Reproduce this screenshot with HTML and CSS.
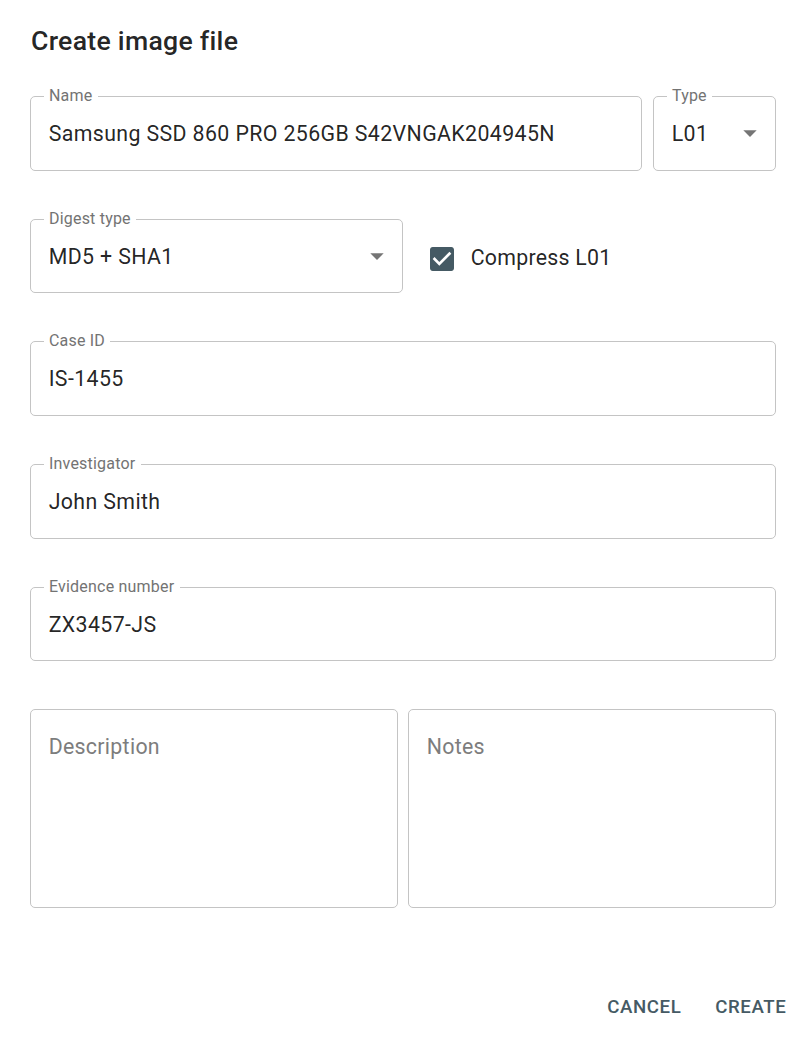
FILE: index.html
```html
<!DOCTYPE html>
<html lang="en">
<head>
<meta charset="utf-8">
<title>Create image file</title>
<link rel="stylesheet" href="styles.css">
</head>
<body>
<div class="dialog">
  <h1 class="dialog-title">Create image file</h1>

  <form class="form">
    <div class="row">
      <div class="field grow">
        <span class="label">Name</span>
        <span class="value">Samsung SSD 860 PRO 256GB S42VNGAK204945N</span>
      </div>
      <div class="field select type">
        <span class="label">Type</span>
        <span class="value">L01</span>
        <svg class="arrow" viewBox="0 0 24 24"><path d="M7 10l5 5 5-5z"/></svg>
      </div>
    </div>

    <div class="row">
      <div class="field select digest">
        <span class="label">Digest type</span>
        <span class="value">MD5 + SHA1</span>
        <svg class="arrow" viewBox="0 0 24 24"><path d="M7 10l5 5 5-5z"/></svg>
      </div>
      <label class="check">
        <span class="check-box">
          <svg viewBox="0 0 24 24"><path d="M19 3H5c-1.11 0-2 .9-2 2v14c0 1.1.89 2 2 2h14c1.11 0 2-.9 2-2V5c0-1.1-.89-2-2-2zm-9 14l-5-5 1.41-1.41L10 14.17l7.59-7.59L19 8l-9 9z"/></svg>
        </span>
        <span class="check-label">Compress L01</span>
      </label>
    </div>

    <div class="field">
      <span class="label">Case ID</span>
      <span class="value">IS-1455</span>
    </div>

    <div class="field">
      <span class="label">Investigator</span>
      <span class="value">John Smith</span>
    </div>

    <div class="field">
      <span class="label">Evidence number</span>
      <span class="value">ZX3457-JS</span>
    </div>

    <div class="pair">
      <div class="field multiline">
        <span class="placeholder">Description</span>
      </div>
      <div class="field multiline">
        <span class="placeholder">Notes</span>
      </div>
    </div>
  </form>

  <div class="actions">
    <button type="button" class="btn">Cancel</button>
    <button type="button" class="btn">Create</button>
  </div>
</div>
</body>
</html>
```

FILE: styles.css
```css
html, body {
  margin: 0;
  padding: 0;
  background: #ffffff;
}

body {
  font-family: Roboto, "Noto Sans", "Liberation Sans", sans-serif;
  color: rgba(0, 0, 0, 0.87);
}

.dialog {
  width: 807px;
  box-sizing: border-box;
  padding: 0 31px 0 30px;
}

.dialog-title {
  margin: 0;
  padding: 19.5px 0 0 1px;
  font-size: 26.67px;
  line-height: 42.67px;
  font-weight: 500;
  letter-spacing: 0.01em;
}

.form {
  display: flex;
  flex-direction: column;
  gap: 48px;
  margin-top: 33.8px;
}

.row {
  display: flex;
  gap: 10.67px;
}

.field {
  position: relative;
  box-sizing: border-box;
  height: 74.67px;
  border: 1px solid #c4c4c4;
  border-radius: 5px;
  display: flex;
  align-items: center;
  padding: 2px 17.67px 0;
}

.grow {
  flex: 1;
}

.type {
  width: 123px;
  flex: none;
}

.digest {
  width: 373px;
  flex: none;
}

.label {
  position: absolute;
  top: -10px;
  left: 12.67px;
  padding: 0 5.33px;
  background: #ffffff;
  font-size: 16px;
  line-height: 18px;
  letter-spacing: 0.2px;
  color: #737373;
  white-space: nowrap;
}

.value {
  font-size: 21.33px;
  line-height: 30.67px;
  letter-spacing: 0.38px;
  white-space: nowrap;
  color: rgba(0, 0, 0, 0.87);
}

.arrow {
  position: absolute;
  right: 9.33px;
  top: calc(50% - 16px);
  width: 32px;
  height: 32px;
  fill: rgba(0, 0, 0, 0.54);
}

.check {
  display: flex;
  align-items: center;
  margin-top: 5.5px;
}

.check-box {
  display: flex;
  padding: 12px 13px 12px 12px;
}

.check-box svg {
  width: 32px;
  height: 32px;
  fill: #455a64;
}

.check-label {
  font-size: 21.33px;
  line-height: 30.67px;
  letter-spacing: 0.25px;
  color: rgba(0, 0, 0, 0.87);
}

.pair {
  display: grid;
  grid-template-columns: 1fr 1fr;
  gap: 10px;
}

.multiline {
  height: 199px;
  align-items: flex-start;
  padding-top: 21.67px;
}

.placeholder {
  font-size: 21.33px;
  line-height: 30.67px;
  letter-spacing: 0.3px;
  color: #7d7d7d;
}

.actions {
  display: flex;
  justify-content: flex-end;
  gap: 12.5px;
  margin: 75px -21px 0 0;
}

.btn {
  border: none;
  background: none;
  padding: 8px 10.67px;
  font-family: Roboto, "Noto Sans", "Liberation Sans", sans-serif;
  font-size: 18.67px;
  line-height: 32.67px;
  font-weight: 500;
  letter-spacing: 0.6px;
  text-transform: uppercase;
  color: #455a64;
  cursor: pointer;
}
```
